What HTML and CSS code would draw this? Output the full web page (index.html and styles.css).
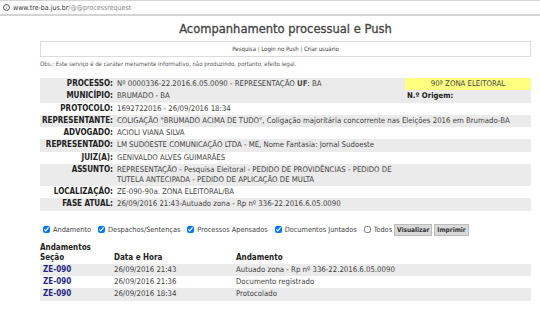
FILE: index.html
```html
<!DOCTYPE html>
<html lang="pt-BR">
<head>
  <meta charset="UTF-8" />
  <title>Acompanhamento processual e Push</title>
  <link rel="stylesheet" href="styles.css">
</head>
<body>
  <div class="barra-endereco">
    <span class="icone-info">i</span>
    <span class="url">www.tre-ba.jus.br</span><span class="url-caminho">/@@processrequest</span>
  </div>

  <div class="pagina">
    <h1>Acompanhamento processual e Push</h1>

    <div class="menu">
      <a href="#">Pesquisa</a> | <a href="#">Login no Push</a> | <a href="#">Criar usuário</a>
    </div>

    <p class="obs">Obs.: Este serviço é de caráter meramente informativo, não produzindo, portanto, efeito legal.</p>

    <table class="processo">
      <tr class="cinza">
        <th>PROCESSO:</th>
        <td>Nº 0000336-22.2016.6.05.0090 - REPRESENTAÇÃO <b>UF</b>: BA</td>
        <td class="zona">90ª ZONA ELEITORAL</td>
      </tr>
      <tr class="cinza">
        <th>MUNICÍPIO:</th>
        <td>BRUMADO - BA</td>
        <td class="origem"><b>N.º Origem:</b></td>
      </tr>
      <tr>
        <th>PROTOCOLO:</th>
        <td colspan="2">1692722016 - 26/09/2016 18:34</td>
      </tr>
      <tr class="cinza">
        <th>REPRESENTANTE:</th>
        <td colspan="2">COLIGAÇÃO "BRUMADO ACIMA DE TUDO", Coligação majoritária concorrente nas Eleições 2016 em Brumado-BA</td>
      </tr>
      <tr>
        <th>ADVOGADO:</th>
        <td colspan="2">ACIOLI VIANA SILVA</td>
      </tr>
      <tr class="cinza">
        <th>REPRESENTADO:</th>
        <td colspan="2">LM SUDOESTE COMUNICAÇÃO LTDA - ME, Nome Fantasia: Jornal Sudoeste</td>
      </tr>
      <tr>
        <th>JUIZ(A):</th>
        <td colspan="2">GENIVALDO ALVES GUIMARÃES</td>
      </tr>
      <tr class="cinza">
        <th>ASSUNTO:</th>
        <td colspan="2" class="assunto">REPRESENTAÇÃO - Pesquisa Eleitoral - PEDIDO DE PROVIDÊNCIAS - PEDIDO DE<br>TUTELA ANTECIPADA - PEDIDO DE APLICAÇÃO DE MULTA</td>
      </tr>
      <tr>
        <th>LOCALIZAÇÃO:</th>
        <td colspan="2">ZE-090-90a. ZONA ELEITORAL/BA</td>
      </tr>
      <tr class="cinza">
        <th>FASE ATUAL:</th>
        <td colspan="2">26/09/2016 21:43-Autuado zona - Rp nº 336-22.2016.6.05.0090</td>
      </tr>
    </table>

    <div class="filtros">
      <label><input type="checkbox" checked> Andamento</label>
      <label><input type="checkbox" checked> Despachos/Sentenças</label>
      <label><input type="checkbox" checked> Processos Apensados</label>
      <label><input type="checkbox" checked> Documentos Juntados</label>
      <label><input type="checkbox"> Todos</label>
      <span class="botoes">
        <button class="botao">Visualizar</button>
        <button class="botao">Imprimir</button>
      </span>
    </div>

    <h2>Andamentos</h2>
    <table class="andamentos">
      <tr>
        <th class="col-secao">Seção</th>
        <th class="col-data">Data e Hora</th>
        <th>Andamento</th>
      </tr>
      <tr class="cinza">
        <td class="secao">ZE-090</td>
        <td>26/09/2016 21:43</td>
        <td>Autuado zona - Rp nº 336-22.2016.6.05.0090</td>
      </tr>
      <tr>
        <td class="secao">ZE-090</td>
        <td>26/09/2016 21:36</td>
        <td>Documento registrado</td>
      </tr>
      <tr class="cinza">
        <td class="secao">ZE-090</td>
        <td>26/09/2016 18:34</td>
        <td>Protocolado</td>
      </tr>
    </table>
  </div>
</body>
</html>
```

FILE: styles.css
```css
* {
  box-sizing: border-box;
  margin: 0;
  padding: 0;
}

body {
  font-family: 'DejaVu Sans Condensed', 'Liberation Sans', sans-serif;
  color: #333;
  background: #ffffff;
  width: 540px;
  height: 335px;
  overflow: hidden;
}

.barra-endereco {
  height: 16px;
  border-top: 1px solid #d6d6d6;
  border-bottom: 2px solid #d4d4d4;
  display: flex;
  align-items: center;
  padding-left: 3px;
  font-size: 7px;
}

.icone-info {
  width: 7px;
  height: 7px;
  border: 1px solid #555;
  border-radius: 50%;
  font-size: 5px;
  line-height: 5px;
  text-align: center;
  margin-right: 3px;
  color: #444;
}

.url {
  color: #333;
}

.url-caminho {
  color: #888;
}

.pagina {
  margin-left: 40px;
  width: 491px;
}

h1 {
  text-align: center;
  font-size: 12.8px;
  font-weight: normal;
  -webkit-text-stroke: 0.3px #444;
  color: #444;
  margin-top: 3px;
  height: 20px;
  line-height: 20px;
}

.menu {
  margin-top: 2px;
  height: 16px;
  border: 1px solid #dcdcdc;
  text-align: center;
  font-size: 6px;
  line-height: 14px;
  color: #666;
}

.menu a {
  color: #333;
  text-decoration: none;
}

.obs {
  font-size: 6px;
  color: #555;
  margin-top: 3px;
  line-height: 8px;
}

.processo {
  margin-top: 10px;
  width: 491px;
  border-collapse: collapse;
  font-size: 8px;
}

.processo th,
.processo td {
  height: 12.3px;
  line-height: 10px;
  padding: 1px 2px;
  vertical-align: top;
}

.processo th {
  width: 75px;
  text-align: right;
  color: #222;
}

.processo td {
  color: #444;
  font-size: 7.75px;
}

.cinza {
  background: #ebebeb;
}

.processo .zona {
  width: 126px;
  background: #ffff80;
  text-align: center;
}

.processo .origem {
  color: #222;
}

.filtros {
  margin-top: 13px;
  display: flex;
  align-items: center;
  gap: 7px;
  font-size: 7.3px;
  color: #444;
  padding-left: 3px;
}

.filtros label {
  display: flex;
  align-items: center;
  gap: 3px;
}

.filtros input {
  width: 7px;
  height: 7px;
}

.botoes {
  display: flex;
  gap: 2px;
  margin-left: -5px;
}

.botao {
  font-family: 'DejaVu Sans Condensed', 'Liberation Sans', sans-serif;
  font-size: 6.5px;
  font-weight: bold;
  background: #d9d9d9;
  border: 1px solid #bdbdbd;
  color: #333;
  padding: 1px 2px;
}

h2 {
  margin-top: 7px;
  font-size: 8px;
  line-height: 10px;
  color: #222;
}

.andamentos {
  width: 491px;
  border-collapse: collapse;
  font-size: 8px;
}

.andamentos th {
  text-align: left;
  color: #222;
  height: 11px;
  line-height: 10px;
}

.andamentos td {
  height: 12.3px;
  line-height: 10px;
  color: #444;
  font-size: 7.75px;
}

.col-secao {
  width: 74px;
}

.col-data {
  width: 122px;
}

.andamentos .secao {
  font-weight: bold;
  font-size: 8px;
  color: #1f2a88;
  padding-left: 3px;
}
```
